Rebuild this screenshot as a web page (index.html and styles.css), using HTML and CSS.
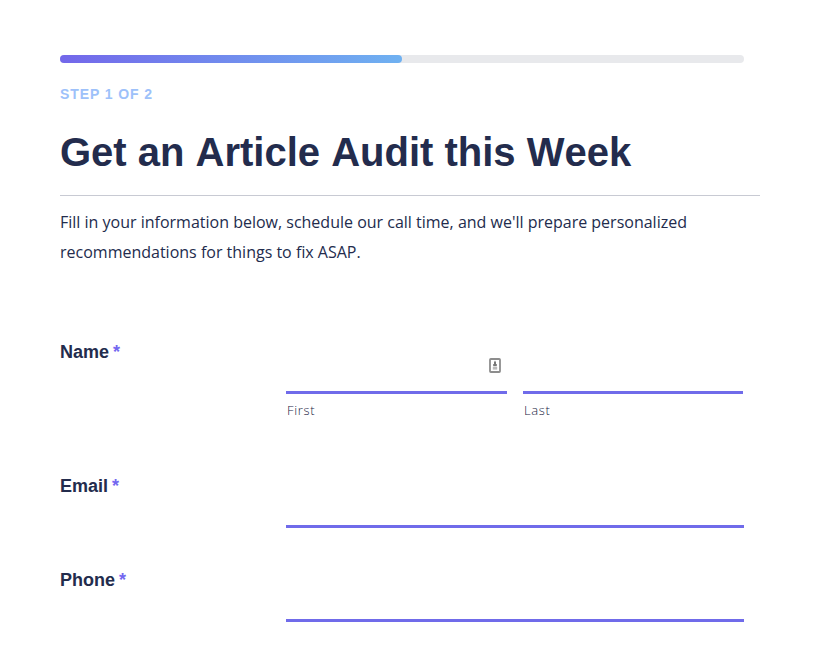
FILE: index.html
```html
<!DOCTYPE html>
<html lang="en">
<head>
    <meta charset="UTF-8">
    <meta name="viewport" content="width=device-width, initial-scale=1.0">
    <title>Get an Article Audit this Week</title>
    <link rel="stylesheet" href="styles.css">
</head>
<body>
    <form class="container">
        <div class="progress">
            <div class="progress-fill" style="width: 50%"></div>
        </div>
        <p class="step">STEP 1 OF 2</p>

        <h1>Get an Article Audit this Week</h1>
        <p class="intro">Fill in your information below, schedule our call time, and we'll prepare personalized recommendations for things to fix ASAP.</p>

        <div class="field name-field">
            <span class="field-label">Name <span class="required">*</span></span>
            <div class="name-inputs">
                <div class="name-part">
                    <input type="text" id="first" required>
                    <label class="sub-label" for="first">First</label>
                    <svg class="autofill" width="12" height="15" viewBox="0 0 12 15">
                        <rect x="1" y="1" width="10" height="13" rx="0.8" fill="#fff" stroke="#8d8d8d" stroke-width="1.8"/>
                        <path d="M6 2.5L7 4.3V6h.8v2.2H4.2V6H5V4.3z" fill="#777"/>
                        <path d="M3.8 9h4.4v2.6H3.8z" fill="#bbb"/>
                    </svg>
                </div>
                <div class="name-part">
                    <input type="text" id="last" required>
                    <label class="sub-label" for="last">Last</label>
                </div>
            </div>
        </div>

        <div class="field email-field">
            <label class="field-label" for="email">Email <span class="required">*</span></label>
            <input type="email" id="email" required>
        </div>

        <div class="field">
            <label class="field-label" for="phone">Phone <span class="required">*</span></label>
            <input type="tel" id="phone" required>
        </div>
    </form>
</body>
</html>
```

FILE: styles.css
```css
* {
    margin: 0;
    padding: 0;
    box-sizing: border-box;
}

body {
    font-family: 'Open Sans', sans-serif;
    background-color: #fff;
    color: #232c4d;
}

.container {
    width: 760px;
    padding: 55px 0 0 60px;
}

/* Progress bar */
.progress {
    width: 684px;
    height: 8px;
    background-color: #e8e9ec;
    border-radius: 4px;
}

.progress-fill {
    height: 8px;
    border-radius: 4px;
    background: linear-gradient(90deg, #7367ea, #6fb1f1);
}

.step {
    margin-top: 21px;
    font: bold 14px/20px 'Liberation Sans', sans-serif;
    letter-spacing: 0.9px;
    color: #9dc1fa;
}

h1 {
    height: 92px;
    padding-top: 24px;
    border-bottom: 1px solid #c8cad3;
    font: bold 40px/48px 'Liberation Sans', sans-serif;
    font-kerning: none;
}

.intro {
    margin-top: 11px;
    font-size: 16px;
    line-height: 30px;
}

/* Form fields */
.field {
    display: flex;
    width: 684px;
    height: 94px;
}

.name-field {
    height: 134px;
    margin-top: 73px;
}

.field-label {
    width: 226px;
    font: bold 18px/24px 'Liberation Sans', sans-serif;
}

.required {
    color: #7367f0;
    margin-left: -1px;
}

input {
    width: 458px;
    height: 54px;
    border: none;
    border-bottom: 3px solid #706bea;
    background: none;
    outline: none;
}

.name-inputs {
    display: grid;
    grid-template-columns: 221px 220px;
    column-gap: 16px;
}

.name-part {
    position: relative;
}

.name-part input {
    display: block;
    width: 100%;
}

.sub-label {
    display: block;
    margin: 6px 0 0 1px;
    font-size: 13px;
    font-weight: 300;
    line-height: 20px;
    letter-spacing: 0.65px;
    color: #1a2344;
}

.autofill {
    position: absolute;
    top: 18px;
    right: 6px;
}
```
